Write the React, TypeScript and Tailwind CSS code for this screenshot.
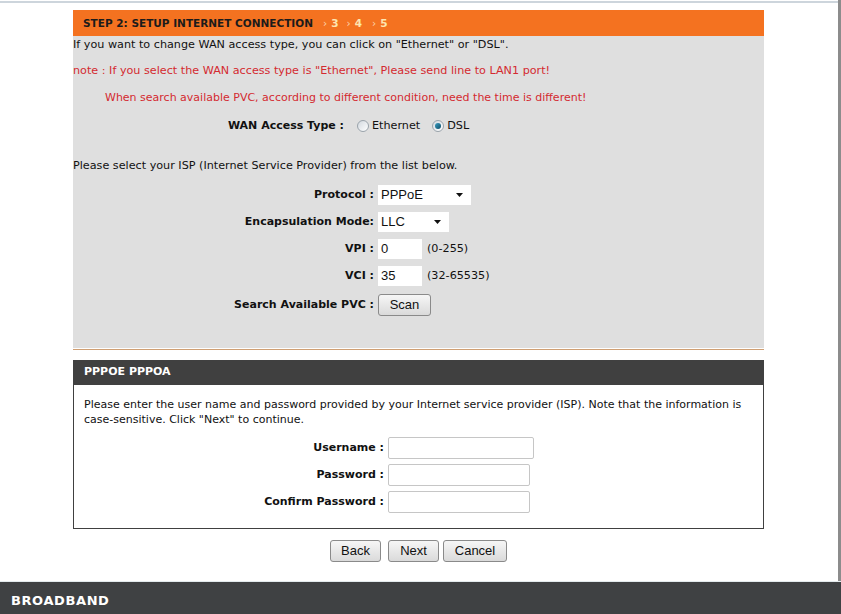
import React from "react";

const Radio = ({ checked }: { checked?: boolean }) => (
  <span className="inline-flex items-center justify-center w-[12px] h-[12px] rounded-full border border-[#9aa3ab] bg-gradient-to-br from-[#d3d9df] to-[#ffffff]">
    {checked ? <span className="w-[6px] h-[6px] rounded-full bg-gradient-to-br from-[#3a9cc0] to-[#0e4f6a]" /> : null}
  </span>
);

const Select = ({ value, w }: { value: string; w: string }) => (
  <div className={`${w} h-[20px] bg-white flex items-center justify-between pl-[3px] pr-[8px] font-['Liberation_Sans',Arial,sans-serif] text-[13px] text-[#111]`}>
    <span>{value}</span>
    <svg width="7" height="4" viewBox="0 0 7 4"><path d="M0 0h7L3.5 4z" fill="#111" /></svg>
  </div>
);

const Btn = ({ label, w, cls = "" }: { label: string; w: string; cls?: string }) => (
  <button className={`${w} h-[22px] rounded-[3px] border border-[#8a8a8a] bg-gradient-to-b from-[#f6f6f6] to-[#dadada] font-['Liberation_Sans',Arial,sans-serif] text-[13px] text-[#111] flex items-center justify-center ${cls}`}>
    {label}
  </button>
);

export default function App() {
  return (
    <div className="w-[841px] h-[614px] bg-white flex flex-col overflow-hidden font-['DejaVu_Sans',Tahoma,sans-serif] text-[11.2px] text-[#111]">
      <div className="flex-1 flex flex-col border-r-[3px] border-[#8c8c8c]">
        <div className="h-[2px] mt-[1px] bg-[#cdd5dc]" />
        <div className="pl-[73px] pt-[7px]">
          <div className="w-[691px]">
            <div className="h-[26px] bg-[#f47220] flex items-center pt-[2px] pl-[10px] font-bold text-[10.5px] text-[#1b1b1b]">
              <span>STEP 2: SETUP INTERNET CONNECTION</span>
              <span className="ml-[10px] text-[#fbd3ae] font-normal">›</span>
              <span className="ml-[4px] text-[#fde6b0]">3</span>
              <span className="ml-[8px] text-[#fbd3ae] font-normal">›</span>
              <span className="ml-[4px] text-[#fde6b0]">4</span>
              <span className="ml-[10px] text-[#fbd3ae] font-normal">›</span>
              <span className="ml-[4px] text-[#fde6b0]">5</span>
            </div>
            <div className="bg-[#dfdfdf] h-[312px] flex flex-col">
              <div className="h-[16px] leading-[16px] mt-[1px]">If you want to change WAN access type, you can click on "Ethernet" or "DSL".</div>
              <div className="h-[16px] leading-[16px] mt-[10px] text-[#d42a30]">note : If you select the WAN access type is "Ethernet", Please send line to LAN1 port!</div>
              <div className="h-[16px] leading-[16px] mt-[11px] pl-[32px] text-[#d42a30] text-[11px]">When search available PVC, according to different condition, need the time is different!</div>
              <div className="h-[20px] mt-[10px] flex items-center">
                <div className="w-[271px] text-right font-bold text-[11px]">WAN Access Type :</div>
                <div className="ml-[13px] flex items-center">
                  <Radio />
                  <span className="ml-[3px]">Ethernet</span>
                  <span className="ml-[12px] flex"><Radio checked /></span>
                  <span className="ml-[3px]">DSL</span>
                </div>
              </div>
              <div className="h-[16px] leading-[16px] mt-[22px]">Please select your ISP (Internet Service Provider) from the list below.</div>
              <div className="mt-[11px] flex flex-col gap-[7px]">
                <div className="h-[20px] flex items-center">
                  <div className="w-[301px] text-right font-bold text-[11px]">Protocol :</div>
                  <div className="ml-[4px]"><Select value="PPPoE" w="w-[93px]" /></div>
                </div>
                <div className="h-[20px] flex items-center">
                  <div className="w-[301px] text-right font-bold text-[11px]">Encapsulation Mode:</div>
                  <div className="ml-[4px]"><Select value="LLC" w="w-[71px]" /></div>
                </div>
                <div className="h-[20px] flex items-center">
                  <div className="w-[301px] text-right font-bold text-[11px]">VPI :</div>
                  <div className="ml-[4px] w-[44px] h-[20px] bg-white flex items-center pl-[3px] font-['Liberation_Sans',Arial,sans-serif] text-[13px]">0</div>
                  <span className="ml-[5px]">(0-255)</span>
                </div>
                <div className="h-[20px] flex items-center">
                  <div className="w-[301px] text-right font-bold text-[11px]">VCI :</div>
                  <div className="ml-[4px] w-[44px] h-[20px] bg-white flex items-center pl-[3px] font-['Liberation_Sans',Arial,sans-serif] text-[13px]">35</div>
                  <span className="ml-[5px]">(32-65535)</span>
                </div>
              </div>
              <div className="h-[22px] mt-[8px] flex items-center">
                <div className="w-[301px] text-right font-bold text-[11px]">Search Available PVC :</div>
                <div className="ml-[4px]"><Btn label="Scan" w="w-[53px]" /></div>
              </div>
            </div>
            <div className="h-[1px] mt-[1px] bg-[#cf9f73]" />
            <div className="h-[10px]" />
            <div className="h-[25px] bg-[#404040] flex items-center pl-[11px] font-bold text-white text-[11px]">PPPOE PPPOA</div>
            <div className="border-x border-b border-[#404040] pl-[10px] pt-[12px] pb-[15px]">
              <div className="leading-[15px] text-[11px]">
                Please enter the user name and password provided by your Internet service provider (ISP). Note that the information is
                <br />
                case-sensitive. Click "Next" to continue.
              </div>
              <div className="mt-[10px] flex flex-col gap-[5px]">
                <div className="h-[22px] flex items-center">
                  <div className="w-[300px] text-right font-bold text-[11px]">Username :</div>
                  <div className="ml-[4px] w-[146px] h-[22px] bg-white border border-[#c6c6c6] rounded-[2px]" />
                </div>
                <div className="h-[22px] flex items-center">
                  <div className="w-[300px] text-right font-bold text-[11px]">Password :</div>
                  <div className="ml-[4px] w-[142px] h-[22px] bg-white border border-[#c6c6c6] rounded-[2px]" />
                </div>
                <div className="h-[22px] flex items-center">
                  <div className="w-[300px] text-right font-bold text-[11px]">Confirm Password :</div>
                  <div className="ml-[4px] w-[142px] h-[22px] bg-white border border-[#c6c6c6] rounded-[2px]" />
                </div>
              </div>
            </div>
            <div className="mt-[11px] flex justify-center">
              <Btn label="Back" w="w-[51px]" />
              <Btn label="Next" w="w-[51px]" cls="ml-[7px]" />
              <Btn label="Cancel" w="w-[64px]" cls="ml-[4px]" />
            </div>
          </div>
        </div>
      </div>
      <div className="h-[1px] bg-[#e3eaed]" />
      <div className="h-[32px] bg-[#3f4143] flex items-center pt-[6px] pl-[11px] font-bold text-white text-[13px] tracking-[0.6px]">BROADBAND</div>
    </div>
  );
}
